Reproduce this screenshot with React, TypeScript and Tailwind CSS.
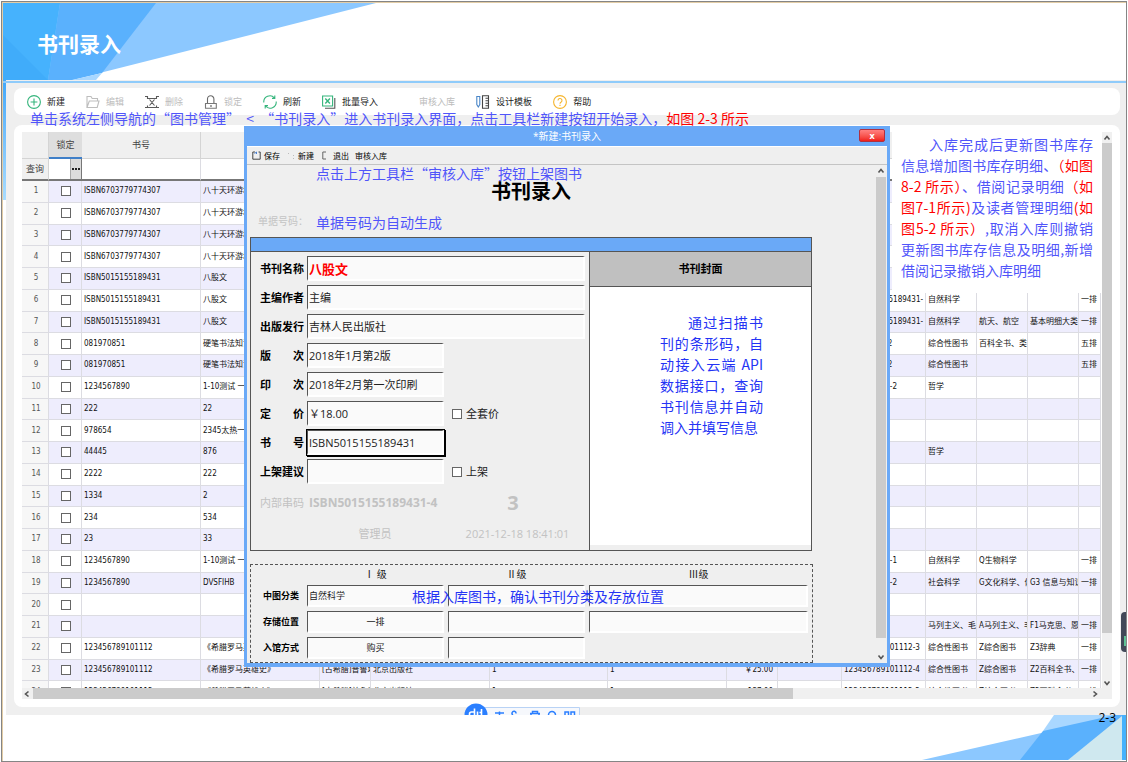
import React from "react";

type Book = {
  no: string;
  title: string;
  author?: string;
  press?: string;
  qty?: string;
  price?: string;
  code?: string;
  c1?: string;
  c2?: string;
  c3?: string;
  shelf?: string;
};

const hero = { no: "123456789101112", title: "《希腊罗马英雄史》", author: "[古希腊]普鲁塔克", press: "北京出版社", qty: "1", price: "￥25.00" };

const books: Book[] = [
  { no: "ISBN6703779774307", title: "八十天环游地球" },
  { no: "ISBN6703779774307", title: "八十天环游地球" },
  { no: "ISBN6703779774307", title: "八十天环游地球" },
  { no: "ISBN6703779774307", title: "八十天环游地球" },
  { no: "ISBN5015155189431", title: "八股文" },
  { no: "ISBN5015155189431", title: "八股文", code: "ISBN5015155189431-", c1: "自然科学", shelf: "一排" },
  { no: "ISBN5015155189431", title: "八股文", code: "ISBN5015155189431-", c1: "自然科学", c2: "航天、航空", c3: "基本明细大类", shelf: "一排" },
  { no: "081970851", title: "硬笔书法知识", code: "081970851-2", c1: "综合性图书", c2: "百科全书、类书", shelf: "五排" },
  { no: "081970851", title: "硬笔书法知识", code: "081970851-2", c1: "综合性图书", shelf: "五排" },
  { no: "1234567890", title: "1-10测试 一年级", code: "1234567890-2", c1: "哲学" },
  { no: "222", title: "22" },
  { no: "978654", title: "2345太热一" },
  { no: "44445", title: "876", c1: "哲学" },
  { no: "2222", title: "222" },
  { no: "1334", title: "2" },
  { no: "234", title: "534" },
  { no: "23", title: "33" },
  { no: "1234567890", title: "1-10测试 一年级", code: "1234567890-1", c1: "自然科学", c2: "Q生物科学", shelf: "一排" },
  { no: "1234567890", title: "DVSFIHB", code: "1234567890-2", c1: "社会科学", c2: "G文化科学、体育", c3: "G3 信息与知识", shelf: "一排" },
  { no: "", title: "" },
  { no: "", title: "", c1: "马列主义、毛泽东", c2: "A马列主义、毛", c3: "F1马克思、恩格斯", shelf: "一排" },
  { ...hero, code: "123456789101112-3", c1: "综合性图书", c2: "Z综合图书", c3: "Z3辞典", shelf: "一排" },
  { ...hero, code: "123456789101112-4", c1: "综合性图书", c2: "Z综合图书", c3: "Z2百科全书、类书", shelf: "一排" },
  { ...hero, price: "￥137.00", code: "123456789101112-2", c1: "综合性图书", c2: "Z综合图书", c3: "Z2百科全书", shelf: "一排" },
];

const g = "#35b57c";

const icons: Record<string, React.ReactNode> = {
  add: (
    <>
      <circle cx="7" cy="7" r="6.4" stroke={g} />
      <path d="M7 3.6v6.8M3.6 7h6.8" stroke={g} />
    </>
  ),
  edit: <path d="M1 12.5V1.5h4l1.2 2h5.3v2M1 12.500l2.300-6.500h9.700l-1.800 6.500z" stroke="#bdbdbd" />,
  del: <path d="M0 1.500h2.500v2h9v-2H14M0 12.500h14M2.500 12v-1.500M11.500 12v-1.500M4.500 4.500l5 6M9.500 4.500l-5 6" stroke="#5a5a5a" />,
  lock: (
    <>
      <path d="M3.500 9V4a3.200 3.200 0 0 1 6.400 0v5" stroke="#6a6a6a" />
      <path d="M1.500 13.300h10.800V8.500H1.500z" stroke="#777" />
      <path d="M7 10v2" stroke="#555" />
    </>
  ),
  refresh: <path d="M.8 7.500A6.100 6.100 0 0 1 11.500 3M13.200 6.500A6.100 6.100 0 0 1 2.500 11M11.800.6v2.800H9M2.200 13.400v-2.800H5" stroke={g} />,
  excel: (
    <>
      <path d="M.6 1h10v10h-10z" stroke={g} />
      <path d="M3.300 3.500l4.600 5M7.900 3.500l-4.600 5" stroke={g} strokeWidth="1.400" />
      <path d="M12.800 3v10.300H3" stroke="#555" />
    </>
  ),
  none: null,
  design: (
    <>
      <path d="M.8 1.500h3v8l-1.500 2.500L.8 9.500z" stroke="#4a86c8" />
      <path d="M6.500.7h6v12.600h-6z" stroke="#444" />
      <path d="M9.500 3.200h3M9.500 5.700h3M9.500 8.200h3M9.500 10.700h3" stroke="#444" />
    </>
  ),
  help: (
    <>
      <circle cx="7" cy="7" r="6.400" stroke="#f5b52e" />
      <path d="M5 5.500a2 2 0 1 1 3 1.700c-.7.400-1 .8-1 1.500M7 9.700v1.200" stroke="#f5b52e" />
    </>
  ),
};

const tools = [
  { icon: "add", label: "新建" },
  { icon: "edit", label: "编辑", off: true },
  { icon: "del", label: "删除", off: true },
  { icon: "lock", label: "锁定", off: true },
  { icon: "refresh", label: "刷新" },
  { icon: "excel", label: "批量导入" },
  { icon: "none", label: "审核入库", off: true },
  { icon: "design", label: "设计模板" },
  { icon: "help", label: "帮助" },
];

function Chevron({ d }: { d: string }) {
  return (
    <svg viewBox="0 0 8 8" className="size-2" fill="none" stroke="#555" strokeWidth="1.600">
      <path d={d} />
    </svg>
  );
}
const UP = "M1.500 5.500L4 2.500l2.500 3";
const DOWN = "M1.500 2.500L4 5.500l2.500-3";
const LEFT = "M5.500 1.500L2.500 4l3 2.500";
const RIGHT = "M2.500 1.500L5.500 4l-3 2.500";

function Banner() {
  return (
    <header className="relative flex h-[77px] items-center overflow-hidden bg-white">
      <svg className="absolute top-0 left-0 h-[77px] w-[376px]" viewBox="3 3 376 77">
        <path d="M3 3H376L72 80H3z" fill="#8cc8ff" />
        <path d="M60 3H156L102 73 72 80H48z" fill="#5ab1fd" />
        <path d="M3 3H60L48 80H3z" fill="#46b2fd" />
        <path d="M3 35L48 80H3z" fill="#40acfa" />
        <path d="M102 73L96 80H72z" fill="#a9d7ff" />
      </svg>
      <h1 className="relative pt-1 pl-[34px] text-[21px] leading-7 font-bold text-white">书刊录入</h1>
    </header>
  );
}

function Toolbar() {
  return (
    <div className="flex h-[27px] items-center gap-[21px] rounded-lg bg-white pl-[13px]">
      {tools.map((t) => (
        <button
          key={t.label}
          disabled={t.off}
          className="flex shrink-0 items-center gap-1.5 text-[9px] leading-4 text-[#222] disabled:text-[#bcbcbc]"
        >
          <svg viewBox="0 0 14 14" className="size-3.5" fill="none" strokeWidth="1.100">
            {icons[t.icon]}
          </svg>
          {t.label}
        </button>
      ))}
    </div>
  );
}

function Cell({ children, className = "" }: { children?: React.ReactNode; className?: string }) {
  return (
    <td className={"overflow-hidden border-r border-b border-[#dcdce2] p-0 pl-0.5 whitespace-nowrap " + className}>{children}</td>
  );
}

function BookTable() {
  return (
    <table className="h-[571px] w-full table-fixed border-separate border-spacing-0 text-[8px] leading-3 text-[#111]">
      <colgroup>
        <col className="w-[27px]" />
        <col className="w-[33px]" />
        <col className="w-[119px]" />
        <col className="w-[119px]" />
        <col className="w-[51px]" />
        <col className="w-[119px]" />
        <col className="w-[118px]" />
        <col className="w-[119px]" />
        <col className="w-[51px]" />
        <col className="w-[64px]" />
        <col className="w-[84px]" />
        <col className="w-[51px]" />
        <col className="w-[51px]" />
        <col className="w-[51px]" />
        <col />
      </colgroup>
      <thead className="text-[#444]">
        <tr className="h-[27px] bg-[#f0f0f0]">
          <th className="border-r border-b border-[#d4d4d4]" />
          <th className="border-b-2 border-[#3f7fc8] bg-[#dedede] p-0 text-[9px] font-normal">锁定</th>
          <th className="border-r border-b border-[#d4d4d4] p-0 text-[9px] font-normal">书号</th>
          {Array.from({ length: 12 }, (_, i) => (
            <th key={i} className="border-r border-b border-[#d4d4d4]" />
          ))}
        </tr>
        <tr className="h-[22px]">
          <th className="border-r border-b-2 border-[#777] border-r-[#d4d4d4] bg-[#f0f0f0] p-0 text-[9px] font-normal">查询</th>
          <th className="border-r border-b-2 border-[#777] p-0">
            <button aria-label="选择查询条件" className="ml-auto flex h-5 w-[11px] items-center justify-center gap-px border-l border-[#aaa] bg-[#dcdcdc]">
              <svg viewBox="0 0 8 2" className="h-0.5 w-2" fill="#222">
                <path d="M0 0h2v2H0zM3 0h2v2H3zM6 0h2v2H6z" />
              </svg>
            </button>
          </th>
          {Array.from({ length: 13 }, (_, i) => (
            <th key={i} className="border-r border-b-2 border-[#777] border-r-[#dcdce2]" />
          ))}
        </tr>
      </thead>
      <tbody>
        {books.map((b, i) => (
          <tr key={i} className="odd:bg-[#eeedfd] even:bg-white">
            <Cell className="bg-[#f7f7f7] pl-0 text-center text-[#555]">{i + 1}</Cell>
            <Cell className="pl-0">
              <input type="checkbox" aria-label={"锁定第" + (i + 1) + "行"} className="mx-auto block size-2.5 appearance-none border border-[#666] bg-white" />
            </Cell>
            <Cell>{b.no}</Cell>
            <Cell>{b.title}</Cell>
            <Cell>{b.author}</Cell>
            <Cell>{b.press}</Cell>
            <Cell>{b.qty}</Cell>
            <Cell>{b.qty}</Cell>
            <Cell className="pr-1 text-right">{b.price}</Cell>
            <Cell />
            <Cell>{b.code}</Cell>
            <Cell>{b.c1}</Cell>
            <Cell>{b.c2}</Cell>
            <Cell>{b.c3}</Cell>
            <Cell>{b.shelf}</Cell>
          </tr>
        ))}
      </tbody>
    </table>
  );
}

const fieldBox = "min-w-0 border-t border-l border-r-2 border-b-2 border-t-[#555] border-l-[#555] border-r-white border-b-white bg-[#fafafa] outline-none";

function Field({ id, label, value, narrow, tone = "text-[11px] text-[#222]", check }: { id: string; label: string; value: string; narrow?: boolean; tone?: string; check?: string }) {
  return (
    <div className="flex items-center">
      <label htmlFor={id} className="mr-[3px] w-11 text-[11px] leading-4 font-bold text-black [text-align-last:justify]">
        {label}
      </label>
      <input id={id} defaultValue={value} className={fieldBox + " h-[25px] pl-px " + (narrow ? "w-[137px] " : "w-[278px] ") + tone} />
      {check && (
        <label className="ml-2 flex items-center gap-1 text-[11px] leading-4 text-[#222]">
          <input type="checkbox" className="size-2.5 appearance-none border border-[#666] bg-white" />
          {check}
        </label>
      )}
    </div>
  );
}

function Classify() {
  const rows = [
    { label: "中图分类", cells: ["自然科学", "", ""] },
    { label: "存储位置", cells: ["一排", "", ""] },
    { label: "入馆方式", cells: ["购买", ""] },
  ];
  return (
    <div className="mt-[13px] grid h-[99px] w-[563px] grid-cols-[52px_137px_137px_219px] content-start gap-x-1 gap-y-1 border border-dashed border-[#555] pt-0.5 text-[9px]">
      <span />
      <span className="text-center text-[10px] leading-[14px]">Ⅰ 级</span>
      <span className="text-center text-[10px] leading-[14px]">Ⅱ级</span>
      <span className="text-center text-[10px] leading-[14px]">Ⅲ级</span>
      {rows.map((r, ri) => (
        <React.Fragment key={r.label}>
          <label htmlFor={"cls" + ri} className="self-center pr-1 text-right text-[9px] leading-[22px] font-bold text-black">
            {r.label}
          </label>
          {r.cells.map((c, ci) => (
            <input
              key={ci}
              id={ci === 0 ? "cls" + ri : undefined}
              aria-label={ci === 0 ? undefined : r.label + (ci + 1) + "级"}
              defaultValue={c}
              className={fieldBox + " h-[22px] pl-px text-[9px] text-[#222] " + (ri > 0 ? "text-center" : "")}
            />
          ))}
          {r.cells.length < 3 && <span />}
        </React.Fragment>
      ))}
    </div>
  );
}

const coverNote = ["刊的条形码，自", "动接入云端 API", "数据接口，查询", "书刊信息并自动"];
const noteFont = "font-['Noto_Sans_CJK_SC',sans-serif] text-[14px]";

function EntryDialog() {
  return (
    <section role="dialog" aria-label="书刊录入" className="absolute top-[126px] left-[244px] w-[646px] border-r-[3px] border-b-4 border-l-[3px] border-[#6aa9f7] bg-[#efefef]">
      <div className="relative flex h-5 items-center justify-center bg-[#6aa9f7] text-[10px] text-white">
        *新建:书刊录入
        <button aria-label="关闭" className="absolute top-[3px] right-0.5 flex h-[13px] w-[26px] items-center justify-center rounded-xs border border-[#b03040] bg-linear-to-b from-[#ff8080] to-[#f01818] text-[9px] leading-none font-bold text-white">
          x
        </button>
      </div>
      <div className="flex h-[19px] items-center border-t border-b border-t-white border-b-[#c4c4c4] pl-[5px] text-[8px] text-black">
        <button className="flex items-center gap-[3px]">
          <svg viewBox="0 0 9 9" className="size-[9px]" fill="none" stroke="#444">
            <path d="M3 1H.8v7.200h7.400V1H6.500" />
            <path d="M2.500 2.500l2-1.500v2" stroke="#4a7fd0" />
          </svg>
          保存
        </button>
        <button className="ml-2 flex items-center gap-1">
          <svg viewBox="0 0 6 9" className="h-[9px] w-1.5" fill="#bbb">
            <path d="M0 2h1v1H0zM5 4h1v1H5zM5 7h1v1H5z" />
          </svg>
          新建
        </button>
        <button className="ml-2 flex items-center gap-1.5">
          <svg viewBox="0 0 5 9" className="h-[9px] w-[5px]" fill="none" stroke="#666">
            <path d="M4 1H.8v7H4" />
          </svg>
          退出
        </button>
        <button className="ml-1.5">审核入库</button>
      </div>

      <div className="flex">
        <div className="min-w-0 flex-1 pl-[3px]">
          <div className="h-[72px] w-[562px] pt-[13px]">
            <h2 className="text-center text-[20px] leading-7 font-bold text-black">书刊录入</h2>
            <p className="mt-1 pl-2 text-[10px] leading-[22px] text-[#c4c4c4]">单据号码：</p>
          </div>

          <div className="w-[562px] border border-[#555]">
            <div className="h-3.5 border-b border-[#555] bg-[#6aa9f7]" />
            <div className="flex">
              <form className="flex w-[338px] flex-col gap-1 pt-1 pl-[9px]">
                <Field id="name" label="书刊名称" value="八股文" tone="text-[13px] font-bold text-[#f00]" />
                <Field id="author" label="主编作者" value="主编" />
                <Field id="press" label="出版发行" value="吉林人民出版社" />
                <Field id="edition" label="版次" value="2018年1月第2版" narrow />
                <Field id="print" label="印次" value="2018年2月第一次印刷" narrow />
                <Field id="price" label="定价" value="￥18.00" narrow check="全套价" />
                <Field id="isbn" label="书号" value="ISBN5015155189431" narrow tone="text-[11px] text-[#222] shadow-[0_0_0_1px_#000,1px_1px_0_1px_#000]" />
                <Field id="advice" label="上架建议" value="" narrow check="上架" />
                <div className="flex h-[30px] items-center text-[#c2c2c2]">
                  <span className="w-[49px] text-[11px]">内部串码</span>
                  <span className="w-48 text-[12px] font-bold">ISBN5015155189431-4</span>
                  <span className="w-6 text-center text-[20px] leading-6 font-bold">3</span>
                </div>
                <div className="flex h-7 items-start text-[11px] text-[#c2c2c2]">
                  <span className="w-[186px] pt-1 pl-11 text-center">管理员</span>
                  <span className="flex-1 pt-1 text-center">2021-12-18 18:41:01</span>
                </div>
              </form>
              <div className="flex flex-1 flex-col border-l border-[#555] bg-white">
                <h3 className="h-[35px] border-b border-[#555] bg-[#c0c0c0] text-center text-[11px] leading-[34px] font-bold text-black">书刊封面</h3>
                <div className={"mt-[25px] ml-[70px] w-[103px] leading-[21px] text-[#2433f5] " + noteFont}>
                  <span className="block pl-7 [text-align-last:justify]">通过扫描书</span>
                  {coverNote.map((l) => (
                    <span key={l} className="block whitespace-nowrap [text-align-last:justify]">{l}</span>
                  ))}
                  <span className="block">调入并填写信息</span>
                </div>
                <div className="mt-auto h-[5px] bg-[#efefef]" />
              </div>
            </div>
          </div>

          <Classify />
        </div>
        <div className="flex w-3 flex-col items-center pr-px">
          <div className="flex h-3 items-center">
            <Chevron d={UP} />
          </div>
          <div className="h-[461px] w-2.5 bg-[#cbcbcb]" />
          <div className="mt-auto flex h-3 items-center">
            <Chevron d={DOWN} />
          </div>
        </div>
      </div>
    </section>
  );
}

const R = ({ children }: { children: React.ReactNode }) => <span className="text-[#f00]">{children}</span>;

function Notes() {
  return (
    <>
      <p className={"absolute top-[108px] left-[30px] leading-5 whitespace-pre text-[#5055fa] " + noteFont}>
        单击系统左侧导航的“图书管理”{"  "}&lt;{"  "}“书刊录入”进入书刊录入界面，点击工具栏新建按钮开始录入，<R>如图 2-3 所示</R>
      </p>
      <p className={"absolute top-[163px] left-[316px] leading-5 whitespace-nowrap text-[#5055fa] " + noteFont}>点击上方工具栏“审核入库”按钮上架图书</p>
      <p className={"absolute top-[212px] left-[316px] leading-5 whitespace-nowrap text-[#5055fa] " + noteFont}>单据号码为自动生成</p>
      <p className={"absolute top-[586px] left-[412px] leading-5 whitespace-nowrap text-[#2433f5] " + noteFont}>根据入库图书，确认书刊分类及存放位置</p>
      <div className={"absolute top-[132px] left-[892px] h-[161px] w-[209px] bg-white pt-0.5 pr-2 pl-[9px] leading-[21px] whitespace-nowrap text-[#5055fa] " + noteFont}>
        <span className="block pl-7 [text-align-last:justify]">入库完成后更新图书库存</span>
        <span className="block [text-align-last:justify]">信息增加图书库存明细、<R>（如图</R></span>
        <span className="block [text-align-last:justify]"><R>8-2 所示）</R>、借阅记录明细<R>（如</R></span>
        <span className="block [text-align-last:justify]"><R>图7-1所示)</R>及读者管理明细<R>(如</R></span>
        <span className="block [text-align-last:justify]"><R>图5-2 所示）</R>,取消入库则撤销</span>
        <span className="block [text-align-last:justify]">更新图书库存信息及明细,新增</span>
        <span className="block">借阅记录撤销入库明细</span>
      </div>
    </>
  );
}

function ImeBar() {
  return (
    <svg className="absolute bottom-0 left-[458px] h-3 w-[117px]" viewBox="0 0 117 12" fill="none" stroke="#2b7fff" strokeWidth="1.500">
      <path d="M12 4.500h103.500V13H12z" fill="#f6f8fc" stroke="#b8d2f5" strokeWidth="1" />
      <circle cx="12" cy="12" r="11.500" fill="#2b7fff" stroke="none" />
      <path d="M10.500 5.500V12M10.500 9H7.500a2 2 0 0 0-2 2v1M13.500 8.500V12M17.500 6v6M17.500 9.500h-2" stroke="#fff" strokeWidth="1.600" />
      <path d="M31 10h9M35.500 8.500v3.500M49 12a2 2 0 1 1 3-1.500M66 10.500h10M68.500 10V8.500h5V10M67 10.500V12M75 10.500V12M84.500 12a3.500 3.500 0 0 1 7 0M101 12V9h3.500v3M107 12V9h3.500v3" />
    </svg>
  );
}

export default function App() {
  return (
    <div className="relative min-h-screen overflow-hidden bg-white pt-px pr-px pl-px font-['Open_Sans','Noto_Sans_CJK_SC',sans-serif] text-[#222]">
      <div className="flex min-h-[761px] flex-col border border-[#858585]">
        <div className="flex flex-1 flex-col border-t border-l border-[#e3cda6]">
          <Banner />
          <main className="flex">
            <div className="h-[120px] w-[3px] bg-linear-to-b from-[#40a8fa] to-[#a8dcff]" />
            <div className="relative min-w-0 flex-1 bg-[#efefef] pr-1.5 pb-2 pl-2">
              <div className="absolute top-px right-0 -left-[3px] h-0.5 bg-[#8fcbfa]" />
              <div className="h-2" />
              <Toolbar />
              <div className="mt-2.5 rounded-lg bg-white px-2 pt-[7px] pb-2">
                <div className="flex">
                  <div className="h-[556px] min-w-0 flex-1 overflow-hidden font-['DejaVu_Sans_Condensed','Noto_Sans_CJK_SC',sans-serif]">
                    <BookTable />
                  </div>
                  <div className="ml-px flex w-2.5 flex-col items-center bg-[#f0f0f0]">
                    <div className="flex h-[11px] items-center">
                      <Chevron d={UP} />
                    </div>
                    <div className="h-[490px] w-full bg-[#cbcbcb]" />
                    <div className="mt-auto flex h-[11px] items-center">
                      <Chevron d={DOWN} />
                    </div>
                  </div>
                </div>
                <div className="flex h-[11px] items-center bg-[#f0f0f0] pl-px">
                  <Chevron d={LEFT} />
                  <div className="ml-0.5 h-full w-[760px] bg-[#cbcbcb]" />
                  <div className="mr-[13px] ml-auto">
                    <Chevron d={RIGHT} />
                  </div>
                </div>
              </div>
              <ImeBar />
              <div className="absolute right-0 bottom-[63px] flex h-10 w-[5px] items-end justify-end rounded-l bg-[#414858] pb-1.5">
                <div className="h-2.5 w-0.5 bg-[#5fc295]" />
              </div>
            </div>
          </main>
          <footer className="relative h-[45px] bg-white">
            <svg className="absolute top-0 right-0 h-[45px] w-[206px]" viewBox="920 715 206 45">
              <path d="M1054 715H1126V735L1043 731z" fill="#a9d7ff" />
              <path d="M922 760L1120 715 1090 760z" fill="#8cc8ff" />
              <path d="M1020 760L1043 731 1115 715H1122V760z" fill="#5ab1fd" />
              <path d="M1068 760L1122 716V760z" fill="#cfe8ef" />
              <path d="M1122 715H1126V760H1122z" fill="#46b2fd" />
            </svg>
            <span className="absolute -top-1.5 right-2.5 text-[12px] leading-[18px] text-black">2-3</span>
          </footer>
        </div>
      </div>
      <EntryDialog />
      <Notes />
    </div>
  );
}
